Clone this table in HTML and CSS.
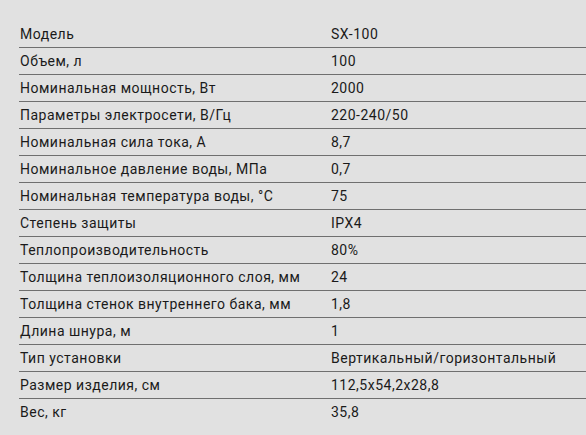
FILE: index.html
```html
<!DOCTYPE html>
<html lang="ru">
<head>
<meta charset="utf-8">
<link rel="stylesheet" href="styles.css">
</head>
<body>
<div class="specs">
  <div class="row"><div class="k">Модель</div><div class="v">SX-100</div></div>
  <div class="row"><div class="k">Объем, л</div><div class="v">100</div></div>
  <div class="row"><div class="k">Номинальная мощность, Вт</div><div class="v">2000</div></div>
  <div class="row"><div class="k">Параметры электросети, В/Гц</div><div class="v">220-240/50</div></div>
  <div class="row"><div class="k">Номинальная сила тока, А</div><div class="v">8,7</div></div>
  <div class="row"><div class="k">Номинальное давление воды, МПа</div><div class="v">0,7</div></div>
  <div class="row"><div class="k">Номинальная температура воды, °С</div><div class="v">75</div></div>
  <div class="row"><div class="k">Степень защиты</div><div class="v">IPX4</div></div>
  <div class="row"><div class="k">Теплопроизводительность</div><div class="v">80%</div></div>
  <div class="row"><div class="k">Толщина теплоизоляционного слоя, мм</div><div class="v">24</div></div>
  <div class="row"><div class="k">Толщина стенок внутреннего бака, мм</div><div class="v">1,8</div></div>
  <div class="row"><div class="k">Длина шнура, м</div><div class="v">1</div></div>
  <div class="row"><div class="k">Тип установки</div><div class="v">Вертикальный/горизонтальный</div></div>
  <div class="row"><div class="k">Размер изделия, см</div><div class="v">112,5x54,2x28,8</div></div>
  <div class="row"><div class="k">Вес, кг</div><div class="v">35,8</div></div>
</div>
</body>
</html>
```
FILE: styles.css
```css
html, body {
  margin: 0;
  padding: 0;
  background: #e1e1e1;
}
body {
  font-family: Roboto, "Liberation Sans", sans-serif;
  font-size: 14px;
  letter-spacing: 0.5px;
  color: #1a1a1a;
}
.specs {
  padding: 21px 0 0 19px;
}
.row {
  display: grid;
  grid-template-columns: 311px 1fr;
  height: 26px;
  align-items: center;
  border-bottom: 1px solid #6f6f6f;
}
.row:last-child {
  border-bottom: none;
}
.k, .v {
  padding-left: 1px;
}
```
